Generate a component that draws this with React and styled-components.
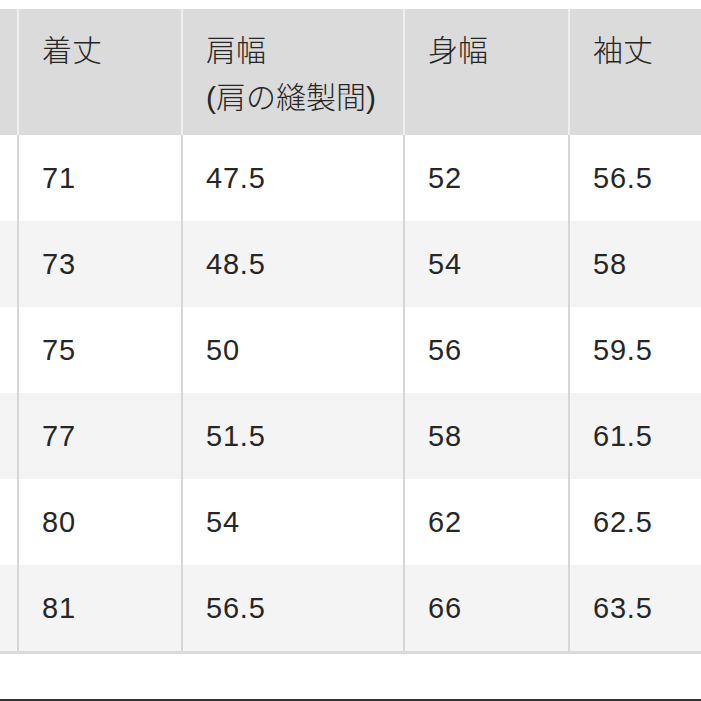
import React from 'react';
import styled, { createGlobalStyle } from 'styled-components';

const Global = createGlobalStyle`
  html, body { margin: 0; padding: 0; background: #fff; }
  body { width: 701px; height: 701px; overflow: hidden; }
`;

const Page = styled.div`
  width: 701px;
  height: 701px;
  overflow: hidden;
  background: #fff;
  display: flex;
  flex-direction: column;
  padding-top: 9px;
  box-sizing: border-box;
  font-family: "Liberation Sans", "Noto Sans CJK JP", sans-serif;
  color: #262626;
`;

const Table = styled.div`
  display: grid;
  grid-template-columns: 17px 164px 222px 165px 133px;
  border-bottom: 3px solid #dadada;
`;

const HeadCell = styled.div`
  background: #dbdbdb;
  height: 126px;
  box-sizing: border-box;
  border-left: ${(p) => (p.$first ? 'none' : '2px solid #efefef')};
  padding: 18px 0 0 23px;
  font-size: 30px;
  font-weight: 300;
  line-height: 47px;
  white-space: nowrap;
`;

const Cell = styled.div`
  background: ${(p) => (p.$alt ? '#f4f4f4' : '#ffffff')};
  height: 86px;
  box-sizing: border-box;
  border-left: ${(p) => (p.$first ? 'none' : '2px solid #d6d6d6')};
  display: flex;
  align-items: center;
  padding-left: 23px;
  font-size: 29px;
  letter-spacing: 0.8px;
`;

const Spacer = styled.div`
  flex: 1;
`;

const BottomRule = styled.div`
  height: 2px;
  background: #333;
`;

const headers = [
  ['着丈'],
  ['肩幅', '(肩の縫製間)'],
  ['身幅'],
  ['袖丈'],
];

const rows = [
  ['71', '47.5', '52', '56.5'],
  ['73', '48.5', '54', '58'],
  ['75', '50', '56', '59.5'],
  ['77', '51.5', '58', '61.5'],
  ['80', '54', '62', '62.5'],
  ['81', '56.5', '66', '63.5'],
];

export default function App() {
  return (
    <>
      <Global />
      <Page>
        <Table>
          <HeadCell $first />
          {headers.map((lines, i) => (
            <HeadCell key={i}>
              {lines.map((l, j) => (
                <div key={j}>{l}</div>
              ))}
            </HeadCell>
          ))}
          {rows.map((r, ri) => (
            <React.Fragment key={ri}>
              <Cell $first $alt={ri % 2 === 1} />
              {r.map((v, ci) => (
                <Cell key={ci} $alt={ri % 2 === 1}>
                  {v}
                </Cell>
              ))}
            </React.Fragment>
          ))}
        </Table>
        <Spacer />
        <BottomRule />
      </Page>
    </>
  );
}
